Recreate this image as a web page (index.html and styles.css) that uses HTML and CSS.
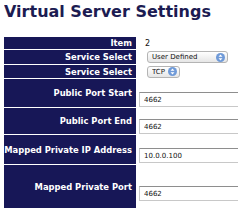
FILE: index.html
```html
<!DOCTYPE html>
<html lang="en">
<head>
  <meta charset="UTF-8">
  <title>Virtual Server Settings</title>
  <link rel="stylesheet" href="styles.css">
</head>
<body>

  <h1 class="title">Virtual Server Settings</h1>

  <table class="settings">
    <tr class="row-item">
      <th>Item</th>
      <td><span class="item-no">2</span></td>
    </tr>
    <tr class="row-select">
      <th>Service Select</th>
      <td>
        <span class="picker picker-wide">
          <select><option>User Defined</option></select>
          <svg class="arrows" width="9" height="9" viewBox="0 0 9 9"><circle cx="4.5" cy="4.5" r="4.5" fill="#6f9ad8"/><path d="M2.5 3.8 L4.5 1.6 L6.5 3.8 Z M2.5 5.2 L4.5 7.4 L6.5 5.2 Z" fill="#fff"/></svg>
        </span>
      </td>
    </tr>
    <tr class="row-proto">
      <th>Service Select</th>
      <td>
        <span class="picker picker-narrow">
          <select><option>TCP</option></select>
          <svg class="arrows" width="9" height="9" viewBox="0 0 9 9"><circle cx="4.5" cy="4.5" r="4.5" fill="#6f9ad8"/><path d="M2.5 3.8 L4.5 1.6 L6.5 3.8 Z M2.5 5.2 L4.5 7.4 L6.5 5.2 Z" fill="#fff"/></svg>
        </span>
      </td>
    </tr>
    <tr class="row-field">
      <th>Public Port Start</th>
      <td><input class="field" type="text" value="4662"></td>
    </tr>
    <tr class="row-field row-short">
      <th>Public Port End</th>
      <td><input class="field" type="text" value="4662"></td>
    </tr>
    <tr class="row-field row-mid">
      <th>Mapped Private IP Address</th>
      <td><input class="field" type="text" value="10.0.0.100"></td>
    </tr>
    <tr class="row-field row-tall">
      <th>Mapped Private Port</th>
      <td><input class="field" type="text" value="4662"></td>
    </tr>
  </table>

</body>
</html>
```

FILE: styles.css
```css
body {
  margin: 0 3px 0 4px;
  background-color: #fff;
  font-family: 'DejaVu Sans', Verdana, sans-serif;
}

.title {
  margin: 3px 0 15px;
  font-size: 16px;
  line-height: 18px;
  font-weight: bold;
  color: #1c1c52;
}

.settings {
  width: 234px;
  border-collapse: separate;
  border-spacing: 0 1px;
  table-layout: fixed;
}

.settings th {
  width: 128px;
  padding: 0 4px 0 0;
  background-color: #171757;
  color: #fff;
  font-size: 8.4px;
  font-weight: bold;
  text-align: right;
  vertical-align: middle;
  white-space: nowrap;
  overflow: hidden;
}

.settings td {
  padding: 0 0 0 3px;
  font-size: 7px;
  color: #111;
  vertical-align: bottom;
}

.row-item th { height: 12px; }
.row-select th { height: 14px; }
.row-proto th { height: 13px; }
.row-field th { height: 28px; }
.row-short th { height: 26px; }
.row-mid th { height: 29px; }
.row-tall th { height: 43px; }

.row-item td,
.row-select td,
.row-proto td {
  vertical-align: middle;
}

.row-mid td { padding-bottom: 1px; }
.row-tall td { padding-bottom: 7px; }

.item-no {
  padding-left: 6px;
  font-size: 8px;
}

.picker {
  position: relative;
  display: block;
  margin-left: 8px;
  height: 10px;
  border: 1px solid #b4b4b4;
  border-radius: 3px;
  background: linear-gradient(#fff, #e6e6e6);
}

.picker-wide { width: 79px; }
.picker-narrow { width: 31px; }

.picker select {
  appearance: none;
  -webkit-appearance: none;
  display: block;
  width: 100%;
  height: 10px;
  margin: 0;
  padding: 0 0 0 4px;
  border: none;
  background: transparent;
  font-family: 'DejaVu Sans', Verdana, sans-serif;
  font-size: 7px;
  line-height: 10px;
  color: #111;
}

.arrows {
  position: absolute;
  right: 2px;
  top: 0.5px;
}

.field {
  display: block;
  box-sizing: border-box;
  width: 104px;
  height: 15px;
  margin: 0;
  padding: 1px 4px 0;
  border: 1px solid #c8c8c8;
  border-top-color: #8e8e8e;
  background: #fff;
  font-family: 'DejaVu Sans', Verdana, sans-serif;
  font-size: 7px;
  color: #111;
}
```
